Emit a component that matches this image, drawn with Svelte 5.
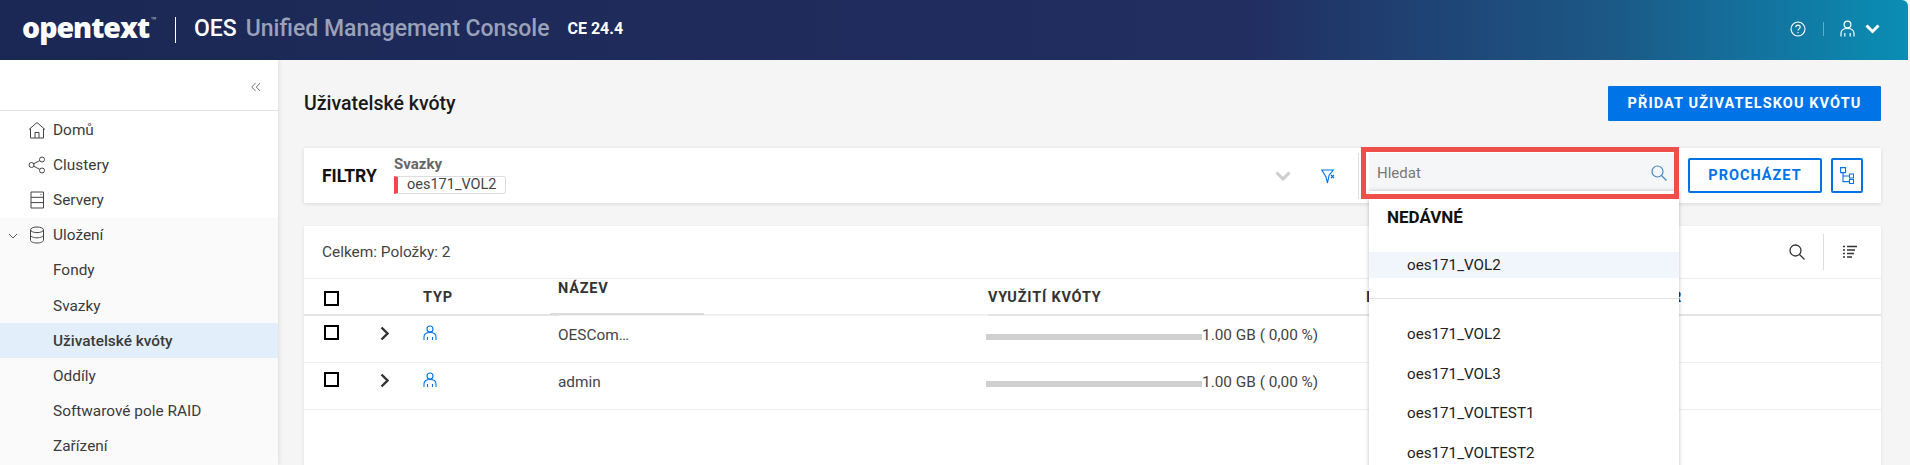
<script lang="ts">
  const nav = [
    { label: 'Domů', icon: 'home' },
    { label: 'Clustery', icon: 'share' },
    { label: 'Servery', icon: 'server' }
  ];
  const storage = ['Fondy', 'Svazky', 'Uživatelské kvóty', 'Oddíly', 'Softwarové pole RAID', 'Zařízení'];
  const rows = ['OESCom…', 'admin'];
  const volumes = ['oes171_VOL2', 'oes171_VOL3', 'oes171_VOLTEST1', 'oes171_VOLTEST2'];
</script>

<div class="page">
  <header class="top">
    <span class="logo">opentext<sup>™</sup></span>
    <span class="brand-sep"></span>
    <span class="oes">OES</span>
    <span class="product">Unified Management Console</span>
    <span class="version">CE 24.4</span>
    <div class="top-right">
      <svg width="16" height="16" viewBox="0 0 16 16" fill="none" stroke="#fff" stroke-width="1.1">
        <circle cx="8" cy="8" r="7" />
        <path d="M5.8 6.3c0-1.3 1-2.2 2.2-2.2s2.2.9 2.2 2.1c0 1.7-2.2 1.7-2.2 3.4" />
        <path d="M8 11v1.3" />
      </svg>
      <span class="top-sep"></span>
      <svg width="15" height="17" viewBox="0 0 15 17" fill="none" stroke="#fff" stroke-width="1.2">
        <circle cx="7.5" cy="4.5" r="3.4" />
        <path d="M1 16.5v-3c0-3 2.5-5 6.5-5s6.500 2 6.500 5v3M4.800 13v3.500M10.200 13v3.500" />
      </svg>
      <svg width="15" height="10" viewBox="0 0 15 10" fill="none" stroke="#fff" stroke-width="3">
        <path d="M1.500 1.500l6 6 6-6" />
      </svg>
    </div>
  </header>

  <div class="body">
    <aside class="side">
      <div class="collapse">
        <svg width="10" height="10" viewBox="0 0 10 10" fill="none" stroke="#666" stroke-width="0.9">
          <path d="M4.500 1L.8 5l3.700 4M9 1L5.300 5 9 9" />
        </svg>
      </div>
      <nav>
        {#each nav as item}
          <div class="nav-row">
            <span class="nav-icon">
              {#if item.icon === 'home'}
                <svg width="18" height="18" viewBox="0 0 18 18" fill="none" stroke="#444" stroke-width="1">
                  <path d="M1 8.500L9 1.500l8 7M2.500 7.500v9.500h13V7.500M7 17v-5.500h4V17" />
                </svg>
              {:else if item.icon === 'share'}
                <svg width="18" height="18" viewBox="0 0 18 18" fill="none" stroke="#444" stroke-width="1">
                  <circle cx="3.500" cy="9" r="2.500" /><circle cx="14" cy="3.500" r="2.500" /><circle cx="14" cy="14.500" r="2.500" />
                  <path d="M5.700 7.800l6.100-3.200M5.700 10.200l6.100 3.200" />
                </svg>
              {:else}
                <svg width="18" height="18" viewBox="0 0 18 18" fill="none" stroke="#444" stroke-width="1">
                  <path d="M3 1h12.500v16H3zM3 6.300h12.500M3 11.600h12.500" /><path d="M12.500 3.600h1" />
                </svg>
              {/if}
            </span>
            <span>{item.label}</span>
          </div>
        {/each}
        <div class="group">
          <div class="nav-row">
            <svg class="caret" width="10" height="6" viewBox="0 0 10 6" fill="none" stroke="#555" stroke-width="1">
              <path d="M1 1l4 4 4-4" />
            </svg>
            <span class="nav-icon">
              <svg width="16" height="18" viewBox="0 0 16 18" fill="none" stroke="#444" stroke-width="1">
                <ellipse cx="8" cy="3.800" rx="6.500" ry="2.800" />
                <path d="M1.500 3.800v10.400c0 1.600 3 2.800 6.500 2.800s6.500-1.200 6.500-2.800V3.800M1.500 9c0 1.600 3 2.800 6.500 2.800s6.500-1.200 6.500-2.800" />
              </svg>
            </span>
            <span>Uložení</span>
          </div>
          {#each storage as label}
            <div class="nav-row" class:active={label === 'Uživatelské kvóty'}>
              <span class="nav-icon"></span>
              <span>{label}</span>
            </div>
          {/each}
        </div>
      </nav>
    </aside>

    <main class="main">
      <div class="title-row">
        <h1>Uživatelské kvóty</h1>
        <button class="primary">PŘIDAT UŽIVATELSKOU KVÓTU</button>
      </div>

      <section class="filters">
        <strong class="filters-label">FILTRY</strong>
        <div class="filter-group">
          <div class="filter-name">Svazky</div>
          <div class="tag">oes171_VOL2</div>
        </div>
        <div class="filter-tools">
          <svg width="16" height="10" viewBox="0 0 16 10" fill="none" stroke="#ccc" stroke-width="3">
            <path d="M1.500 1.500l6.500 6.500 6.500-6.500" />
          </svg>
          <svg class="funnel" width="15" height="15" viewBox="0 0 15 15" fill="none" stroke="#0073e7" stroke-width="1.100">
            <path d="M.8 1h11.500L8 6.500 6.500 14 5 8z" />
            <path d="M10 6l3 3M13 6l-3 3" />
          </svg>
        </div>
        <div class="search-wrap">
          <div class="search">
            <span>Hledat</span>
            <svg width="16" height="16" viewBox="0 0 16 16" fill="none" stroke="#4a86c0" stroke-width="1.200">
              <circle cx="6.500" cy="6.500" r="5.500" /><path d="M10.500 10.500l5 5" />
            </svg>
          </div>
          <div class="dropdown">
            <div class="recent-title">NEDÁVNÉ</div>
            <div class="recent-item">oes171_VOL2</div>
            <div class="drop-sep"></div>
            {#each volumes as v}
              <div class="drop-item">{v}</div>
            {/each}
          </div>
          <div class="highlight"></div>
        </div>
        <button class="outline">PROCHÁZET</button>
        <button class="outline icon-only" aria-label="Strom">
          <svg width="14" height="17" viewBox="0 0 14 17" fill="none" stroke="#0073e7" stroke-width="1.100">
            <path d="M.6.600h5v5h-5zM9.500 7h4v4h-4zM9.500 12.500h4v4h-4zM3 5.600v9h6.500M3 9h6.500" />
          </svg>
        </button>
      </section>

      <section class="table-card">
        <div class="table-tools">
          <span class="count">Celkem: Položky: 2</span>
          <svg width="16" height="16" viewBox="0 0 16 16" fill="none" stroke="#333" stroke-width="1.300">
            <circle cx="6.500" cy="6.500" r="5.500" /><path d="M10.500 10.500l5 5" />
          </svg>
          <span class="tools-sep"></span>
          <svg width="14" height="14" viewBox="0 0 14 14" fill="none" stroke="#333" stroke-width="1.300">
            <path d="M0 1.500h2M4 1.500h10M0 5h2M4 5h8M0 8.500h2M4 8.500h7M0 12h2M4 12h5" />
          </svg>
        </div>
        <div class="thead">
          <span class="cell"><span class="check"></span></span>
          <span class="cell"></span>
          <span class="cell th">TYP</span>
          <span class="cell th name-th"><span>NÁZEV</span></span>
          <span class="cell th">VYUŽITÍ KVÓTY</span>
          <span class="cell th">I</span>
          <span class="cell th">R</span>
        </div>
        {#each rows as name}
          <div class="trow">
            <span class="cell"><span class="check"></span></span>
            <span class="cell">
              <svg width="9" height="15" viewBox="0 0 9 15" fill="none" stroke="#333" stroke-width="2.400">
                <path d="M1.500 1.500l6 6-6 6" />
              </svg>
            </span>
            <span class="cell user">
              <svg width="14" height="15" viewBox="0 0 14 15" fill="none" stroke="#0073e7" stroke-width="1.100">
                <circle cx="7" cy="4" r="3" />
                <path d="M1 15v-3c0-2.800 2.400-4.500 6-4.500s6 1.700 6 4.500v3M4.500 12v3M9.500 12v3" />
              </svg>
            </span>
            <span class="cell">{name}</span>
            <span class="cell usage">
              <span class="bar"></span>
              <span>1.00 GB ( 0,00 %)</span>
            </span>
          </div>
        {/each}
      </section>
    </main>
  </div>
</div>

<style>
  :global(body) {
    margin: 0;
    overflow: hidden;
  }

  .page {
    width: 1910px;
    height: 465px;
    overflow: hidden;
    display: flex;
    flex-direction: column;
    font-family: Roboto, 'Liberation Sans', sans-serif;
    color: #333;
    background: #f5f5f5;
  }

  /* header */
  .top {
    height: 60px;
    flex: none;
    margin-right: 2px;
    border-top-right-radius: 6px;
    display: flex;
    align-items: center;
    padding: 0 28px 3px 22px;
    box-sizing: border-box;
    color: #fff;
    background: linear-gradient(90deg, #1b2855 0%, #222d60 65%, #1b5a88 85%, #0a8eb5 100%);
  }

  .logo {
    font-family: 'Open Sans', sans-serif;
    font-weight: 800;
    font-size: 28.500px;
    letter-spacing: -1px;
    width: 153px;
    flex: none;
    line-height: 1;
    margin-top: -2px;
  }

  .logo sup {
    font-size: 7px;
    letter-spacing: 0;
    font-weight: 400;
    vertical-align: 16px;
    line-height: 0;
    margin-left: 2px;
    color: #bbb;
  }

  .brand-sep {
    width: 1px;
    height: 26px;
    background: #fff;
    margin-right: 18px;
    margin-top: 2px;
  }

  .oes {
    font-size: 23px;
    font-weight: 500;
    margin-right: 9px;
  }

  .product {
    font-size: 23px;
    font-weight: 500;
    color: #9aa1b8;
  }

  .version {
    font-size: 16px;
    font-weight: 700;
    margin-left: 18px;
  }

  .top-right {
    margin-left: auto;
    display: flex;
    align-items: center;
  }

  .top-sep {
    width: 1px;
    height: 14px;
    background: #6fa8bd;
    margin: 0 16px 0 17px;
  }

  .top-right svg:last-child {
    margin-left: 10px;
  }

  /* sidebar */
  .body {
    flex: 1;
    display: flex;
    min-height: 0;
  }

  .side {
    width: 278px;
    flex: none;
    background: #fff;
    box-shadow: 1px 0 4px rgba(0, 0, 0, 0.1);
    font-size: 15.400px;
    color: #3b3b3b;
    z-index: 1;
  }

  .collapse {
    height: 51px;
    box-sizing: border-box;
    border-bottom: 1px solid #e0e0e0;
    padding: 22px 17px 0 0;
    display: flex;
    justify-content: flex-end;
    align-items: flex-start;
    margin-bottom: 1.500px;
  }

  .nav-row {
    position: relative;
    height: 35.100px;
    display: flex;
    align-items: center;
    padding-left: 28px;
    gap: 7px;
  }

  .nav-icon {
    width: 18px;
    height: 18px;
    display: flex;
    justify-content: center;
  }

  .caret {
    position: absolute;
    left: 8px;
    top: 15px;
  }

  .group {
    background: #fafafa;
    padding-bottom: 20px;
  }

  .active {
    background: #e2effb;
    font-weight: 500;
  }

  /* main */
  .main {
    flex: 1;
    min-width: 0;
    padding: 26px 29px 0 26px;
  }

  .title-row {
    height: 35px;
    display: flex;
    justify-content: space-between;
    align-items: center;
    margin-bottom: 27px;
  }

  h1 {
    margin: -1px 0 0;
    font-size: 19.500px;
    font-weight: 500;
    color: #1a1a1a;
  }

  button {
    font-family: inherit;
    font-weight: 700;
    letter-spacing: 1px;
    cursor: pointer;
    padding: 0;
  }

  .primary {
    width: 273px;
    height: 35px;
    border: none;
    border-radius: 1px;
    font-size: 14.500px;
    letter-spacing: 1.100px;
    color: #fff;
    background: #0073e7;
  }

  .filters {
    height: 55px;
    background: #fff;
    box-shadow: 0 1px 4px rgba(0, 0, 0, 0.12);
    display: flex;
    align-items: center;
    padding: 0 18px;
    margin-bottom: 23px;
  }

  .filters-label {
    font-size: 17.500px;
    font-weight: 700;
    color: #111;
    width: 72px;
    flex: none;
  }

  .filter-group {
    flex: 1;
    margin-top: -2px;
  }

  .filter-name {
    font-size: 15px;
    font-weight: 700;
    color: #666;
    line-height: 18px;
    margin-bottom: 3px;
  }

  .tag {
    box-sizing: border-box;
    width: 112px;
    height: 18px;
    line-height: 16px;
    border: 1px solid #ddd;
    border-left: 4px solid #f6444e;
    border-radius: 0 3px 3px 0;
    padding-left: 9px;
    font-size: 14.500px;
    color: #444;
  }

  .filter-tools {
    display: flex;
    align-items: center;
    gap: 30px;
    height: 46px;
    padding-right: 22px;
    border-right: 1px solid #ddd;
  }

  .funnel {
    margin-top: 1px;
  }

  .search-wrap {
    position: relative;
    width: 310px;
    margin: 0 9px 0 10px;
    height: 55px;
  }

  .search {
    box-sizing: border-box;
    height: 43px;
    margin-top: 5px;
    background: #f5f6f8;
    border-bottom: 1px solid #e2e2e2;
    display: flex;
    align-items: center;
    justify-content: space-between;
    padding: 0 12px 2px 8px;
    font-size: 15px;
    color: #777;
  }

  .highlight {
    position: absolute;
    left: -8px;
    right: 0;
    top: -1px;
    height: 52px;
    border: 5px solid #ef4f4a;
    box-sizing: border-box;
    pointer-events: none;
    z-index: 3;
  }

  .dropdown {
    position: absolute;
    left: 0;
    right: 0;
    top: 43px;
    height: 300px;
    background: #fff;
    box-shadow: 0 0 4px rgba(0, 0, 0, 0.25);
    z-index: 2;
    font-size: 15.200px;
    color: #222;
  }

  .recent-title {
    padding: 7px 0 0 18px;
    margin-top: 7px;
    height: 54px;
    line-height: 24px;
    font-size: 17px;
    font-weight: 700;
    color: #111;
    box-sizing: border-box;
  }

  .recent-item {
    height: 26px;
    line-height: 26px;
    padding-left: 38px;
    background: #f1f6fd;
  }

  .drop-sep {
    height: 1px;
    background: #e2e2e2;
    margin: 20px 0 16px;
  }

  .drop-item {
    height: 39.500px;
    line-height: 39.500px;
    padding-left: 38px;
  }

  .outline {
    box-sizing: border-box;
    width: 134px;
    height: 35px;
    flex: none;
    border: 2px solid #0073e7;
    border-radius: 2px;
    background: #fff;
    color: #0073e7;
    font-size: 14.500px;
  }

  .icon-only {
    width: 32px;
    margin-left: 9px;
    display: flex;
    align-items: center;
    justify-content: center;
  }

  .table-card {
    height: 300px;
    background: #fff;
    box-shadow: 0 1px 3px rgba(0, 0, 0, 0.1);
  }

  .table-tools {
    height: 52px;
    border-bottom: 1px solid #eee;
    display: flex;
    align-items: center;
    padding: 0 24px 0 18px;
    font-size: 15.400px;
    color: #444;
  }

  .count {
    flex: 1;
  }

  .tools-sep {
    width: 1px;
    height: 36px;
    background: #ddd;
    margin: 0 19px 0 18px;
  }

  .thead,
  .trow {
    display: grid;
    grid-template-columns: 56px 43px 135px 430px 378px 306px 1fr;
    box-sizing: border-box;
    padding-left: 20px;
    border-bottom: 1px solid #eee;
  }

  .thead {
    height: 37px;
    border-bottom: 2px solid #e4e4e4;
  }

  .trow {
    height: 47px;
    font-size: 15.400px;
    color: #444;
    padding-top: 10px;
  }

  .cell {
    display: flex;
    align-items: flex-start;
    white-space: nowrap;
  }

  .thead .cell {
    padding-top: 10px;
  }

  .trow .cell {
    line-height: 18px;
  }

  .th {
    font-size: 14.500px;
    font-weight: 700;
    letter-spacing: 0.8px;
    color: #333;
  }

  .thead .name-th {
    position: relative;
    padding-top: 1px;
    height: 37px;
    box-sizing: border-box;
    border-bottom: 2px solid #f0f0f0;
  }

  .name-th::after {
    content: '';
    position: absolute;
    left: -8px;
    bottom: -1px;
    width: 154px;
    height: 2px;
    background: #dcdcdc;
  }

  .check {
    width: 15px;
    height: 15px;
    box-sizing: border-box;
    border: 2px solid #000;
    margin-top: -1px;
  }

  .thead .check {
    margin-top: 2px;
  }

  .user {
    margin-top: -1px;
  }

  .usage {
    margin-left: -2px;
  }

  .bar {
    width: 216px;
    height: 6px;
    background: #d0d0d0;
    margin-top: 8px;
  }
</style>
